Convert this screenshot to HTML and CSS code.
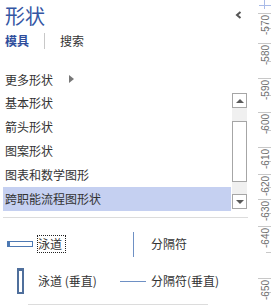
FILE: index.html
```html
<!DOCTYPE html>
<html lang="zh-CN">
  <head>
    <meta charset="UTF-8" />
    <meta name="viewport" content="width=device-width, initial-scale=1.0" />
    <title>形状</title>
    <link rel="stylesheet" href="styles.css">
  </head>
  <body>
    <div class="app">
      <div class="panel">
        <div class="head">
          <h1 class="title">形状</h1>
          <svg class="collapse" width="7" height="8" viewBox="0 0 7 8">
            <polyline points="5.5,1 2,4 5.5,7" fill="none" stroke="#555" stroke-width="2" />
          </svg>
        </div>
        <div class="tabs">
          <span class="tab active">模具</span>
          <span class="tab-sep"></span>
          <span class="tab">搜索</span>
        </div>
        <div class="more">更多形状<span class="more-arrow"></span></div>
        <div class="stencil-list">
          <ul class="rows">
            <li>基本形状</li>
            <li>箭头形状</li>
            <li>图案形状</li>
            <li>图表和数学图形</li>
            <li class="selected">跨职能流程图形状</li>
          </ul>
          <div class="vscroll">
            <div class="sb-btn up"></div>
            <div class="sb-track"><div class="sb-thumb"></div></div>
            <div class="sb-btn down"></div>
          </div>
        </div>
        <div class="divider"></div>
        <div class="shapes">
          <div class="shape">
            <span class="shape-icon"><span class="lane-h"></span></span>
            <span class="shape-label focused">泳道</span>
          </div>
          <div class="shape">
            <span class="shape-icon"><span class="sep-v"></span></span>
            <span class="shape-label">分隔符</span>
          </div>
          <div class="shape">
            <span class="shape-icon"><span class="lane-v"></span></span>
            <span class="shape-label">泳道 (垂直)</span>
          </div>
          <div class="shape">
            <span class="shape-icon"><span class="sep-h"></span></span>
            <span class="shape-label">分隔符(垂直)</span>
          </div>
        </div>
        <div class="hscroll"></div>
      </div>

      <!-- vertical ruler of the drawing canvas -->
      <svg class="ruler" width="15" height="305" viewBox="0 0 15 305">
        <g stroke="#c8c8c8" stroke-width="1">
          <line x1="2" y1="13.5" x2="15" y2="13.5" />
          <line x1="2" y1="43.5" x2="15" y2="43.5" />
          <line x1="2" y1="78.5" x2="15" y2="78.5" />
          <line x1="2" y1="112.5" x2="15" y2="112.5" />
          <line x1="2" y1="147.5" x2="15" y2="147.5" />
          <line x1="2" y1="174.5" x2="15" y2="174.5" />
          <line x1="2" y1="199.5" x2="15" y2="199.5" />
          <line x1="2" y1="226.5" x2="15" y2="226.5" />
          <line x1="2" y1="278.5" x2="15" y2="278.5" />
          <line x1="10" y1="28.5" x2="15" y2="28.5" />
          <line x1="10" y1="61.5" x2="15" y2="61.5" />
          <line x1="10" y1="95.5" x2="15" y2="95.5" />
          <line x1="10" y1="130.5" x2="15" y2="130.5" />
          <line x1="10" y1="161.5" x2="15" y2="161.5" />
          <line x1="10" y1="187.5" x2="15" y2="187.5" />
          <line x1="10" y1="213.5" x2="15" y2="213.5" />
          <line x1="10" y1="252.5" x2="15" y2="252.5" />
          <line x1="10" y1="292.5" x2="15" y2="292.5" />
        </g>
        <g stroke="#a9bbe8" stroke-width="1">
          <line x1="3" y1="5.5" x2="15" y2="5.5" />
          <line x1="8.5" y1="0" x2="8.5" y2="9" />
        </g>
        <g class="ruler-labels" text-anchor="end">
          <text transform="translate(13,15) rotate(-90)">-570</text>
          <text transform="translate(13,45) rotate(-90)">-580</text>
          <text transform="translate(13,80) rotate(-90)">-590</text>
          <text transform="translate(13,114) rotate(-90)">-600</text>
          <text transform="translate(13,149) rotate(-90)">-610</text>
          <text transform="translate(13,176) rotate(-90)">-620</text>
          <text transform="translate(13,201) rotate(-90)">-630</text>
          <text transform="translate(13,228) rotate(-90)">-640</text>
          <text transform="translate(13,280) rotate(-90)">-650</text>
        </g>
      </svg>
    </div>
  </body>
</html>
```
FILE: styles.css
```css
body {
  margin: 0;
  background: #fff;
  overflow: hidden;
  font-family: "Noto Sans CJK SC", "Noto Sans", sans-serif;
  color: #333;
}
.app {
  display: flex;
  width: 271px;
  height: 305px;
}
.panel {
  width: 256px;
  flex-shrink: 0;
}
.ruler {
  display: block;
  flex-shrink: 0;
}
.ruler-labels {
  font-family: "Liberation Sans", sans-serif;
  font-size: 10px;
  fill: #6f6f6f;
}
/* header */
.head {
  display: flex;
  justify-content: space-between;
  align-items: flex-start;
  padding: 2px 14px 0 5px;
}
.title {
  margin: 0;
  font-size: 20px;
  line-height: 28px;
  font-weight: normal;
  color: #3456a4;
}
.collapse {
  margin-top: 9px;
}
.tabs {
  display: flex;
  align-items: center;
  gap: 15px;
  height: 16px;
  margin-top: 3px;
  padding-left: 5px;
  font-size: 12px;
  line-height: 16px;
}
.tab.active {
  font-weight: bold;
  color: #2e4d9c;
}
.tab-sep {
  width: 1px;
  height: 16px;
  background: #c8c8c8;
}
/* stencil list */
.more {
  display: flex;
  align-items: center;
  height: 24px;
  margin-top: 18px;
  padding-left: 5px;
  font-size: 12px;
}
.more-arrow {
  width: 0;
  height: 0;
  margin-left: 16px;
  border-left: 5px solid #777;
  border-top: 4px solid transparent;
  border-bottom: 4px solid transparent;
}
.stencil-list {
  display: flex;
  gap: 1px;
  height: 120px;
  margin-left: 3px;
}
.rows {
  width: 228px;
  margin: 0;
  padding: 0;
  list-style: none;
  font-size: 12px;
}
.rows li {
  height: 24px;
  line-height: 24px;
  padding-left: 2px;
  white-space: nowrap;
}
.rows li.selected {
  background: #c5d0f1;
}
.vscroll {
  display: flex;
  flex-direction: column;
  width: 15px;
  padding: 2px 0;
}
.sb-btn {
  display: flex;
  align-items: center;
  justify-content: center;
  height: 15px;
  box-sizing: border-box;
  border: 1px solid #a6a6a6;
  background: #fff;
}
.sb-btn.up::after,
.sb-btn.down::after {
  content: "";
  width: 0;
  height: 0;
  border-left: 4px solid transparent;
  border-right: 4px solid transparent;
}
.sb-btn.up::after {
  border-bottom: 4px solid #5a5a5a;
}
.sb-btn.down::after {
  border-top: 4px solid #5a5a5a;
}
.sb-track {
  flex: 1;
  padding-top: 13px;
  background: #f0f0f0;
}
.sb-thumb {
  height: 61px;
  box-sizing: border-box;
  border: 1px solid #a6a6a6;
  background: #fff;
}
.divider {
  width: 245px;
  height: 1px;
  margin: 6px 0 0 3px;
  background: #dcdcdc;
}
/* shapes of the stencil */
.shapes {
  display: grid;
  grid-template-columns: 113px 1fr;
  row-gap: 7px;
  margin-top: 11px;
  padding-left: 5px;
}
.shape {
  display: flex;
  align-items: center;
  gap: 3px;
  height: 30px;
  font-size: 12px;
  line-height: 16px;
  white-space: nowrap;
}
.shape-icon {
  display: flex;
  align-items: center;
  justify-content: center;
  width: 30px;
  height: 30px;
  flex-shrink: 0;
}
.shape-label.focused {
  padding-right: 3px;
  outline: 1px dotted #222;
}
.lane-h {
  width: 26px;
  height: 6px;
  box-sizing: border-box;
  border: 1px solid #4d79b3;
  border-left-width: 3px;
}
.lane-v {
  width: 7px;
  height: 26px;
  box-sizing: border-box;
  border: 2px solid #4f6f9c;
  border-top-width: 3px;
}
.sep-v {
  width: 1px;
  height: 25px;
  background: #6e90c4;
}
.sep-h {
  width: 26px;
  height: 1px;
  background: #6e90c4;
}
.hscroll {
  width: 180px;
  height: 1px;
  margin: 8px 0 0 28px;
  background: #dcdcdc;
}
```
